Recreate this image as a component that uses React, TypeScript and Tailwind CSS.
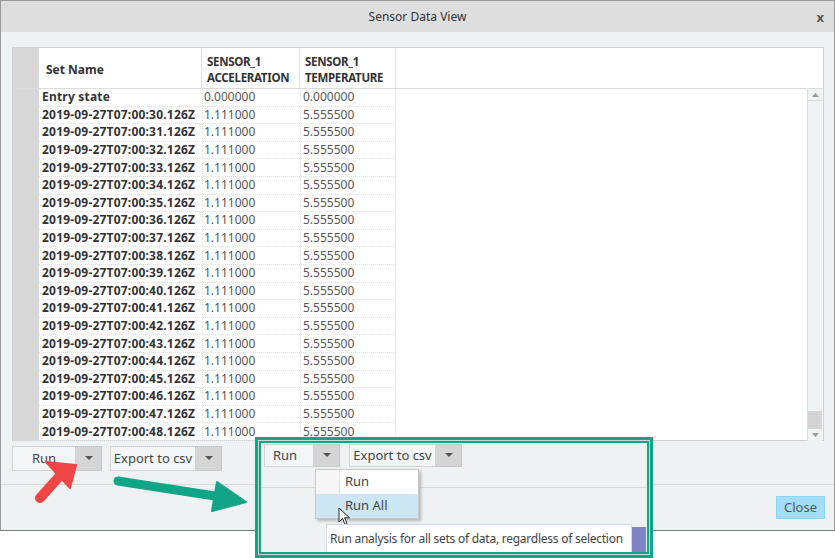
import React from "react";

const rows: [string, string, string][] = [
  ["Entry state", "0.000000", "0.000000"],
  ...Array.from({ length: 19 }, (_, i) => [
    `2019-09-27T07:00:${30 + i}.126Z`,
    "1.111000",
    "5.555500",
  ] as [string, string, string]),
];

function SplitButton({ label, w, left }: { label: string; w: string; left?: boolean }) {
  return (
    <div className="flex h-full">
      <div
        className={`${w} h-full flex items-center ${left ? "justify-start pl-2" : "justify-center"} bg-[#f3f6f6] border border-[#d2d2d2] text-[13px] text-[#444]`}
      >
        {label}
      </div>
      <div className="w-[26px] h-full flex items-center justify-center bg-[#d5d5d5] border border-l-0 border-[#c8c8c8]">
        <svg width="8" height="5" viewBox="0 0 8 5">
          <path d="M0 0 L8 0 L4 4 Z" fill="#555" />
        </svg>
      </div>
    </div>
  );
}

export default function App() {
  return (
    <div
      className="relative w-[835px] h-[558px] bg-white overflow-hidden"
      style={{ fontFamily: '"Noto Sans", "Open Sans", sans-serif' }}
    >
      {/* Dialog */}
      <div className="w-[835px] h-[531px] flex flex-col border border-[#9a9a9a] border-b-[#777] bg-[#eef2f2]">
        {/* Title bar */}
        <div className="h-[31px] shrink-0 bg-[#dedede] flex items-center justify-center relative text-[12px] text-[#333]">
          <span>Sensor Data View</span>
          <span className="absolute right-[10px] top-[7px] text-[13px] font-bold text-[#555]">x</span>
        </div>

        {/* Content */}
        <div className="flex-1 flex flex-col pl-[11px] pr-[10px] pt-[15px]">
          {/* Table */}
          <div className="w-[812px] h-[394px] border border-[#cfcfcf] bg-white flex flex-col">
            {/* Header */}
            <div className="h-[41px] flex border-b border-[#dcdcdc] shrink-0">
              <div className="w-[26px] bg-[#d8d8d8]" />
              <div className="w-[163px] flex items-center pl-[7px] pt-[3px] text-[12px] font-bold text-[#333] border-r border-[#e3e3e3]">
                Set Name
              </div>
              <div className="w-[98px] flex flex-col justify-center pl-[5px] pt-[3px] text-[11.5px] tracking-[-0.3px] font-bold text-[#333] leading-[16px] border-r border-[#e3e3e3] whitespace-nowrap">
                <span>SENSOR_1</span>
                <span>ACCELERATION</span>
              </div>
              <div className="w-[96px] flex flex-col justify-center pl-[5px] pt-[3px] text-[11.5px] tracking-[-0.3px] font-bold text-[#333] leading-[16px] border-r border-[#e3e3e3] whitespace-nowrap">
                <span>SENSOR_1</span>
                <span>TEMPERATURE</span>
              </div>
              <div className="flex-1" />
            </div>
            {/* Body */}
            <div className="flex-1 flex">
              <div className="w-[26px] bg-[#d8d8d8]" />
              <div className="flex flex-col">
                {rows.map((r, i) => (
                  <div key={i} className="h-[17.6px] flex border-b border-dotted border-[#e4e4e4]">
                    <div className="w-[163px] flex items-center pl-[3px] text-[12px] font-bold text-[#333] whitespace-nowrap tracking-[0.2px]">
                      {r[0]}
                    </div>
                    <div className="w-[98px] flex items-center pl-[1px] text-[12px] text-[#555] border-l border-dotted border-[#e4e4e4]">
                      {r[1]}
                    </div>
                    <div className="w-[96px] flex items-center pl-[2px] text-[12px] text-[#555] border-l border-r border-dotted border-[#e4e4e4]">
                      {r[2]}
                    </div>
                  </div>
                ))}
              </div>
              <div className="flex-1" />
              {/* Scrollbar */}
              <div className="w-[15px] mr-[1px] flex flex-col bg-[#eef3f3] border-l border-[#dedede]">
                <div className="h-[12px] flex items-center justify-center border-b border-[#d6d6d6]">
                  <svg width="7" height="4" viewBox="0 0 7 4">
                    <path d="M0 4 L7 4 L3.5 0 Z" fill="#999" />
                  </svg>
                </div>
                <div className="flex-1" />
                <div className="h-[18px] bg-[#d4d4d4]" />
                <div className="h-[12px] flex items-center justify-center">
                  <svg width="7" height="4" viewBox="0 0 7 4">
                    <path d="M0 0 L7 0 L3.5 4 Z" fill="#999" />
                  </svg>
                </div>
              </div>
            </div>
          </div>

          {/* Buttons row */}
          <div className="h-[25px] mt-[5px] flex gap-[8px]">
            <SplitButton label="Run" w="w-[64px]" />
            <SplitButton label="Export to csv" w="w-[86px]" />
          </div>
        </div>

        {/* Footer */}
        <div className="h-[46px] shrink-0 border-t border-[#d8d8d8] flex items-center justify-end pr-[9px]">
          <div className="w-[49px] h-[23px] bg-[#a3def8] border border-[#8fd3f2] flex items-center justify-center text-[13px] text-[#555]">
            Close
          </div>
        </div>
      </div>

      {/* Annotation arrows */}
      <svg className="absolute left-0 top-0" width="835" height="558" viewBox="0 0 835 558">
        <g>
          <line x1="40" y1="498" x2="58" y2="478" stroke="#f04545" strokeWidth="10" strokeLinecap="round" />
          <path d="M76 465 L46 462 L70 488 Z" fill="#f04545" strokeLinejoin="round" stroke="#f04545" strokeWidth="2" />
        </g>
        <g>
          <line x1="118" y1="481" x2="215" y2="496" stroke="#0fa586" strokeWidth="9" strokeLinecap="round" />
          <path d="M246 502 L217 482 L212 511 Z" fill="#0fa586" strokeLinejoin="round" stroke="#0fa586" strokeWidth="2" />
        </g>
      </svg>

      {/* Annotation: inset screenshot */}
      <div className="absolute left-[255px] top-[437px] w-[398px] h-[121px] border-[3px] border-[#11a585] bg-[#cfd4d4] p-[1px]">
        <div className="w-full h-full border-[2px] border-[#11a585] bg-[#eef2f2] relative overflow-hidden">
          <div className="absolute left-0 right-0 top-[44px] border-t border-[#d8d8d8]" />
          <div className="absolute left-[3px] top-[1px] h-[23px] flex gap-[9px]">
            <SplitButton label="Run" w="w-[50px]" left />
            <SplitButton label="Export to csv" w="w-[87px]" />
          </div>
          {/* Dropdown menu */}
          <div className="absolute left-[54px] top-[26px] w-[104px] h-[50px] bg-white border border-[#c8c8c8] shadow-[2px_2px_3px_rgba(0,0,0,0.25)] flex flex-col">
            <div className="h-[24px] flex">
              <div className="w-[24px] border-r border-[#e2e2e2] bg-[#f7f7f7]" />
              <div className="flex items-center pl-[5px] text-[13px] text-[#444]">Run</div>
            </div>
            <div className="h-[24px] flex bg-[#cce6f4]">
              <div className="w-[24px]" />
              <div className="flex items-center pl-[5px] text-[13px] text-[#444]">Run All</div>
            </div>
          </div>
          {/* Cursor */}
          <svg className="absolute left-[77px] top-[64px]" width="14" height="20" viewBox="0 0 14 20">
            <path d="M1 1 L1 15 L4.5 11.5 L7 17.5 L9 16.6 L6.6 10.8 L11.5 10.8 Z" fill="white" stroke="#222" strokeWidth="1" strokeLinejoin="round" />
          </svg>
          {/* Close button sliver */}
          <div className="absolute left-[370px] top-[84px] w-[15px] h-[30px] bg-[#7f84c6]" />
          {/* Tooltip */}
          <div className="absolute left-[65px] top-[81px] w-[306px] h-[40px] bg-white border border-[#d0d8e0] pl-[3px] pt-[5px] text-[12px] tracking-[-0.25px] text-[#444] whitespace-nowrap">
            Run analysis for all sets of data, regardless of selection
          </div>
        </div>
      </div>
    </div>
  );
}
